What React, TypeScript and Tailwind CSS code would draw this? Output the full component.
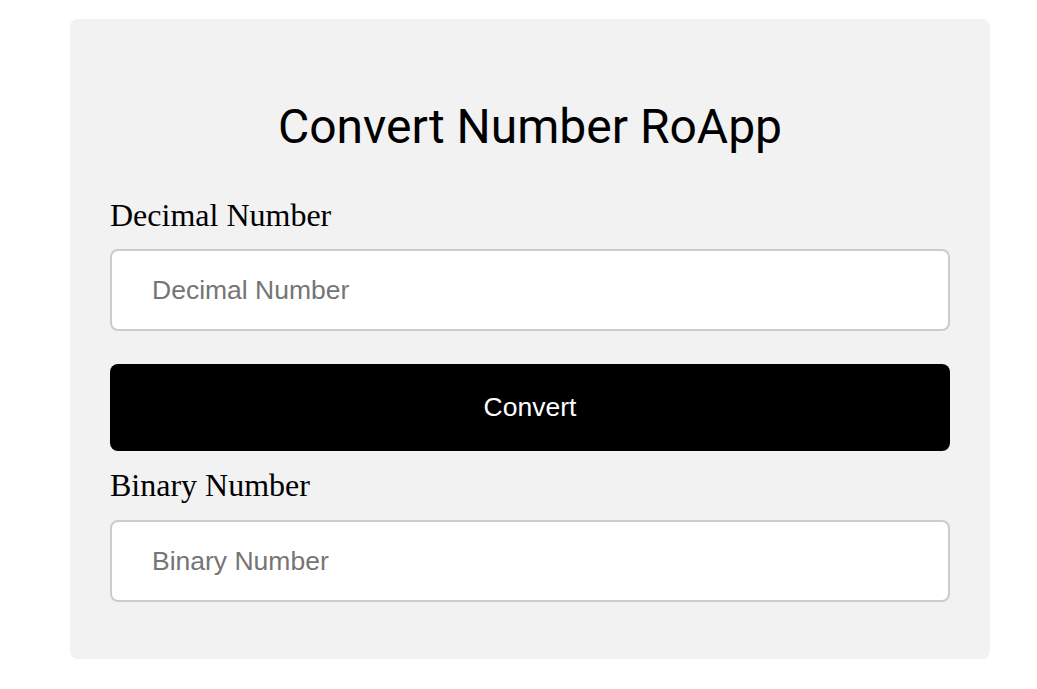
export default function App() {
  return (
    <div className="min-h-screen bg-white pt-[19px]">
      <div className="ml-[70px] w-[920px] rounded-lg bg-[#f2f2f2] px-10 pt-[78px] pb-[57px]">
        <h1 className="text-center font-['Roboto',sans-serif] text-[48px] leading-[60px] text-black">
          Convert Number RoApp
        </h1>

        <label className="mt-[40px] block font-['Liberation_Serif',serif] text-[32px] leading-[36px] text-black">
          Decimal Number
        </label>
        <input
          type="text"
          placeholder="Decimal Number"
          className="mt-[16px] block h-[82px] w-full rounded-lg border-2 border-[#cccccc] bg-white px-10 font-['Liberation_Sans',sans-serif] text-[26.5px] text-black outline-none placeholder:text-[#757575]"
        />

        <button className="mt-[33px] block h-[87px] w-full rounded-lg bg-black font-['Liberation_Sans',sans-serif] text-[26.5px] text-white">
          Convert
        </button>

        <label className="mt-[16px] block font-['Liberation_Serif',serif] text-[32px] leading-[36px] text-black">
          Binary Number
        </label>
        <input
          type="text"
          placeholder="Binary Number"
          className="mt-[17px] block h-[82px] w-full rounded-lg border-2 border-[#cccccc] bg-white px-10 font-['Liberation_Sans',sans-serif] text-[26.5px] text-black outline-none placeholder:text-[#757575]"
        />
      </div>
    </div>
  );
}
